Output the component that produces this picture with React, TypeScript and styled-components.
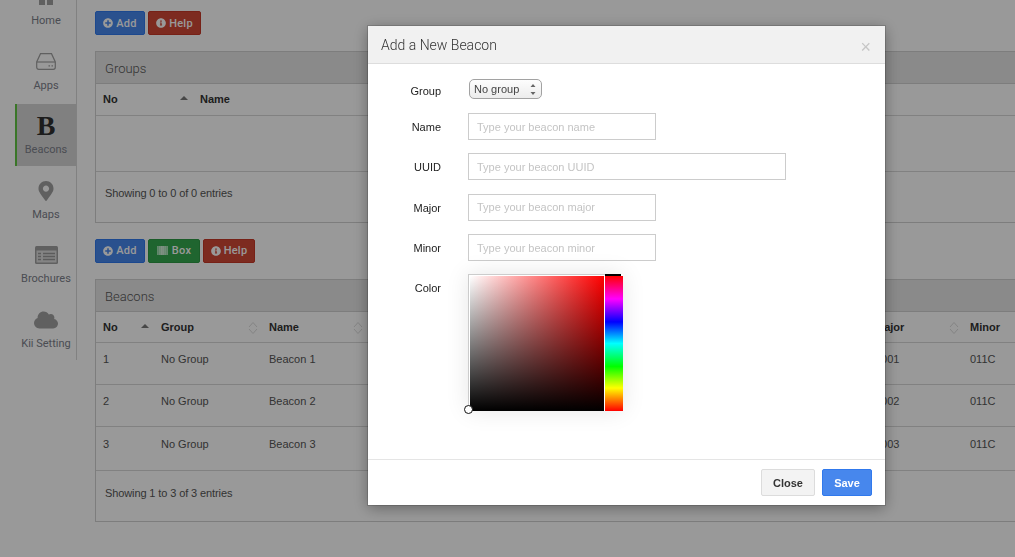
import styled, { createGlobalStyle } from 'styled-components'
import { FaPlusCircle, FaInfoCircle, FaMapMarkerAlt, FaCloud } from 'react-icons/fa'

const GlobalStyle = createGlobalStyle`
  html, body {
    margin: 0;
    height: 100%;
    overflow: hidden;
    background: #fff;
    font-family: "Liberation Sans", Arial, sans-serif;
    font-size: 11px;
    color: #555;
  }
  * { box-sizing: border-box; }
`

const Page = styled.div`
  display: flex;
  align-items: flex-start;
`

const Sidebar = styled.nav`
  width: 62px;
  margin: -25px 0 0 15px;
  height: 385px;
  border-right: 1px solid #d8d8d8;
  flex-shrink: 0;
  display: flex;
  flex-direction: column;
  gap: 2.5px;
  font-family: Roboto, sans-serif;
`

const NavItem = styled.a<{ $active?: boolean }>`
  height: 62px;
  padding: 8px 0 0 1px;
  display: flex;
  flex-direction: column;
  align-items: center;
  font-size: 11px;
  line-height: 14px;
  color: #7c808a;
  background: ${(p) => (p.$active ? '#d6d6d6' : 'transparent')};
  box-shadow: ${(p) => (p.$active ? 'inset 2px 0 0 #62c544' : 'none')};
  white-space: nowrap;
`

const IconSlot = styled.div`
  height: 28px;
  margin-bottom: 3px;
  display: flex;
  align-items: center;
  justify-content: center;
  color: #a0a0a0;
`

const BeaconGlyph = styled.span`
  font-family: "Liberation Serif", serif;
  font-weight: bold;
  font-size: 28px;
  line-height: 28px;
  color: #303030;
`

const Main = styled.main`
  flex: 1;
  min-width: 0;
  padding: 11px 0 0 18px;
  margin-right: -10px;
`

const Toolbar = styled.div`
  display: flex;
  gap: 3px;
  margin-bottom: 16px;
`

const ToolButton = styled.button<{ $bg: string; $edge: string; $w: number }>`
  width: ${(p) => p.$w}px;
  height: 24px;
  padding: 0;
  border: 1px solid ${(p) => p.$edge};
  border-radius: 2px;
  background: ${(p) => p.$bg};
  color: #fff;
  font-family: Roboto, sans-serif;
  font-size: 11px;
  font-weight: 500;
  letter-spacing: 0.25px;
  display: flex;
  align-items: center;
  justify-content: center;
  gap: 3px;
`

const Swatch = styled.span`
  width: 11px;
  height: 9px;
  margin-right: 1px;
  background: repeating-linear-gradient(90deg, rgba(255, 255, 255, 0.25) 0 1px, transparent 1px 2px),
    linear-gradient(90deg, #7fd294, #cfeed6 45%, #8ad89e);
`

const Panel = styled.section`
  border: 1px solid #d0d0d0;
  margin-bottom: 16px;
`

const PanelHeading = styled.h3`
  margin: 0;
  height: 32px;
  padding: 0 9px;
  background: #e6e6e6;
  border-bottom: 1px solid #d0d0d0;
  font-family: Roboto, sans-serif;
  font-weight: 300;
  font-size: 13px;
  line-height: 34px;
  color: #555;
`

const Table = styled.table`
  width: 100%;
  border-collapse: collapse;
  table-layout: fixed;
`

const HeadCell = styled.th`
  position: relative;
  height: 31px;
  padding: 0 7px;
  text-align: left;
  font-size: 11px;
  font-weight: bold;
  color: #333;
  border-bottom: 1px solid #d8d8d8;
`

const SortMark = styled.svg`
  position: absolute;
  right: 4px;
  top: 9px;
`

const Cell = styled.td<{ $h: number; $pad?: number }>`
  height: ${(p) => p.$h}px;
  padding: ${(p) => p.$pad ?? 10}px 7px 0;
  vertical-align: top;
  font-size: 11px;
  line-height: 13px;
  color: #555;
  border-bottom: 1px solid #d8d8d8;
`

const TableInfo = styled.div<{ $top: number }>`
  height: 50px;
  padding: ${(p) => p.$top}px 9px 0;
  font-size: 11px;
  letter-spacing: -0.11px;
  line-height: 13px;
  color: #555;
`

const Backdrop = styled.div`
  position: fixed;
  inset: 0;
  background: rgba(0, 0, 0, 0.4);
`

const Modal = styled.div`
  position: fixed;
  left: 368px;
  top: 26px;
  width: 517px;
  height: 479px;
  display: flex;
  flex-direction: column;
  background: #fff;
  box-shadow: 0 0 0 1px rgba(0, 0, 0, 0.15), 0 3px 14px rgba(0, 0, 0, 0.35);
`

const ModalHeader = styled.header`
  height: 38px;
  padding: 0 13px;
  display: flex;
  align-items: center;
  justify-content: space-between;
  background: #f1f1f1;
  border-bottom: 1px solid #ddd;
`

const ModalTitle = styled.h4`
  margin: 0;
  font-family: Roboto, sans-serif;
  font-weight: 300;
  font-size: 14px;
  color: #333;
`

const CloseX = styled.span`
  padding-top: 4px;
  margin-right: 1px;
  font-size: 18px;
  line-height: 18px;
  color: #c6c6c6;
`

const ModalBody = styled.div`
  flex: 1;
  padding-top: 15px;
  display: flex;
  flex-direction: column;
  gap: 13.33px;
`

const FormRow = styled.div<{ $h?: number }>`
  height: ${(p) => p.$h ?? 27}px;
  display: grid;
  grid-template-columns: 73px 1fr;
  column-gap: 27px;
  align-items: start;
`

const Label = styled.label<{ $lh?: number }>`
  text-align: right;
  font-size: 11px;
  line-height: ${(p) => p.$lh ?? 28}px;
  color: #222;
`

const FakeSelect = styled.div`
  position: relative;
  width: 73px;
  height: 20px;
  margin-left: 1px;
  padding-left: 4px;
  border: 1px solid #a2a2a2;
  border-radius: 5px;
  background: linear-gradient(#fdfdfd, #ececec);
  font-size: 11px;
  line-height: 18px;
  color: #444;
`

const SelectArrows = styled.svg`
  position: absolute;
  right: 4px;
  top: 3px;
`

const TextInput = styled.input<{ $w: number }>`
  display: block;
  width: ${(p) => p.$w}px;
  height: 27px;
  padding: 0 8px;
  border: 1px solid #ccc;
  border-radius: 0;
  outline: none;
  font-family: "Liberation Sans", Arial, sans-serif;
  font-size: 11px;
  &::placeholder {
    color: #c4c4c4;
    opacity: 1;
  }
`

const Picker = styled.div`
  position: relative;
  display: flex;
  width: 155px;
  height: 137px;
  box-shadow: 0 0 22px rgba(0, 0, 0, 0.1);
`

const SatBox = styled.div`
  width: 137px;
  height: 137px;
  border-top: 1px solid #ccc;
  border-left: 1px solid #ccc;
  padding: 1px 1px 0 1px;
  background: #fff;
`

const SatFill = styled.div`
  width: 100%;
  height: 100%;
  background: linear-gradient(to top, #000, transparent), linear-gradient(to right, #fff, #f00);
`

const HueBar = styled.div`
  width: 18px;
  height: 135px;
  margin-top: 2px;
  background: linear-gradient(#f00, #f0f 17%, #00f 34%, #0ff 50%, #0f0 67%, #ff0 83%, #f00);
`

const HueCursor = styled.span`
  position: absolute;
  left: 137px;
  top: 0;
  width: 16px;
  height: 2px;
  background: #000;
`

const SatCursor = styled.span`
  position: absolute;
  left: -4px;
  top: 131px;
  width: 9px;
  height: 9px;
  border: 1px solid #111;
  border-radius: 50%;
  background: #fff;
`

const ModalFooter = styled.footer`
  height: 46px;
  padding: 9px 13px 0 0;
  display: flex;
  justify-content: flex-end;
  gap: 7px;
  border-top: 1px solid #e5e5e5;
`

const FooterButton = styled.button<{ $primary?: boolean }>`
  width: ${(p) => (p.$primary ? 50 : 54)}px;
  height: 27px;
  padding: 0;
  border-radius: 2px;
  border: 1px solid ${(p) => (p.$primary ? '#3079ed' : '#dcdcdc')};
  background: ${(p) => (p.$primary ? '#4787ed' : '#f3f3f3')};
  color: ${(p) => (p.$primary ? '#fff' : '#333')};
  font-family: "Liberation Sans", Arial, sans-serif;
  font-size: 11px;
  font-weight: bold;
`

const HomeIcon = () => (
  <svg width="20" height="16" viewBox="0 0 20 16" fill="currentColor">
    <path d="M10 0 0 8h3v8h6v-6h2v6h6V8h3z" />
  </svg>
)

const DriveIcon = () => (
  <svg width="20" height="17" viewBox="0 0 20 17" fill="none" stroke="currentColor" strokeWidth="1.2">
    <path d="M4.5.7h11L19.3 9v5.3a2 2 0 0 1-2 2H2.7a2 2 0 0 1-2-2V9z" />
    <path d="M.9 9h18.2" />
    <path d="M12.5 12.8h1.5M15.5 12.8H17" />
  </svg>
)

const ListIcon = () => (
  <svg width="23" height="18" viewBox="0 0 23 18">
    <rect width="23" height="18" rx="1.5" fill="currentColor" />
    <rect x="1.5" y="4.5" width="20" height="12" fill="#ddd" />
    <path d="M3 7.5h3M8 7.5h12M3 10.5h3M8 10.5h12M3 13.5h3M8 13.5h12" stroke="#999" strokeWidth="1.4" />
  </svg>
)

const SortAsc = () => (
  <SortMark width="10" height="12" viewBox="0 0 10 12">
    <path d="M1 7 5 3l4 4z" fill="#777" />
  </SortMark>
)

const SortBoth = () => (
  <SortMark width="10" height="14" viewBox="0 0 10 14" fill="none" stroke="#dcdcdc">
    <path d="M1 6 5 1.5 9 6M1 8l4 4.5L9 8" />
  </SortMark>
)

const navItems = [
  { label: 'Home', icon: <HomeIcon /> },
  { label: 'Apps', icon: <DriveIcon /> },
  { label: 'Beacons', icon: <BeaconGlyph>B</BeaconGlyph>, active: true },
  { label: 'Maps', icon: <FaMapMarkerAlt size={20} /> },
  { label: 'Brochures', icon: <ListIcon /> },
  { label: 'Kii Setting', icon: <FaCloud size={24} /> },
]

const beacons = [
  { no: 1, h: 42, pad: 10, major: '0001' },
  { no: 2, h: 42, pad: 10, major: '0002' },
  { no: 3, h: 44, pad: 11, major: '0003' },
]

const fields = [
  { label: 'Name', placeholder: 'Type your beacon name', w: 188 },
  { label: 'UUID', placeholder: 'Type your beacon UUID', w: 318 },
  { label: 'Major', placeholder: 'Type your beacon major', w: 188 },
  { label: 'Minor', placeholder: 'Type your beacon minor', w: 188 },
]

const App = () => {
  return (
    <>
      <GlobalStyle />
      <Page>
        <Sidebar>
          {navItems.map((v) => (
            <NavItem key={v.label} $active={v.active}>
              <IconSlot>{v.icon}</IconSlot>
              {v.label}
            </NavItem>
          ))}
        </Sidebar>
        <Main>
          <Toolbar>
            <ToolButton $bg="#4787ed" $edge="#3079ed" $w={50}>
              <FaPlusCircle size={10} /> Add
            </ToolButton>
            <ToolButton $bg="#d14836" $edge="#c53727" $w={53}>
              <FaInfoCircle size={10} /> Help
            </ToolButton>
          </Toolbar>
          <Panel>
            <PanelHeading>Groups</PanelHeading>
            <Table>
              <colgroup>
                <col width="97" />
                <col />
              </colgroup>
              <thead>
                <tr>
                  <HeadCell>
                    No
                    <SortAsc />
                  </HeadCell>
                  <HeadCell>Name</HeadCell>
                </tr>
              </thead>
              <tbody>
                <tr>
                  <Cell colSpan={2} $h={56} />
                </tr>
              </tbody>
            </Table>
            <TableInfo $top={15}>Showing 0 to 0 of 0 entries</TableInfo>
          </Panel>
          <Toolbar>
            <ToolButton $bg="#4787ed" $edge="#3079ed" $w={50}>
              <FaPlusCircle size={10} /> Add
            </ToolButton>
            <ToolButton $bg="#35a84f" $edge="#2d9a45" $w={52}>
              <Swatch /> Box
            </ToolButton>
            <ToolButton $bg="#d14836" $edge="#c53727" $w={52}>
              <FaInfoCircle size={10} /> Help
            </ToolButton>
          </Toolbar>
          <Panel>
            <PanelHeading>Beacons</PanelHeading>
            <Table>
              <colgroup>
                <col width="58" />
                <col width="108" />
                <col width="105" />
                <col width="501" />
                <col width="95" />
                <col />
              </colgroup>
              <thead>
                <tr>
                  <HeadCell>
                    No
                    <SortAsc />
                  </HeadCell>
                  <HeadCell>
                    Group
                    <SortBoth />
                  </HeadCell>
                  <HeadCell>
                    Name
                    <SortBoth />
                  </HeadCell>
                  <HeadCell>
                    UUID
                    <SortBoth />
                  </HeadCell>
                  <HeadCell>
                    Major
                    <SortBoth />
                  </HeadCell>
                  <HeadCell>Minor</HeadCell>
                </tr>
              </thead>
              <tbody>
                {beacons.map((b) => (
                  <tr key={b.no}>
                    <Cell $h={b.h} $pad={b.pad}>{b.no}</Cell>
                    <Cell $h={b.h} $pad={b.pad}>No Group</Cell>
                    <Cell $h={b.h} $pad={b.pad}>Beacon {b.no}</Cell>
                    <Cell $h={b.h} $pad={b.pad} />
                    <Cell $h={b.h} $pad={b.pad}>{b.major}</Cell>
                    <Cell $h={b.h} $pad={b.pad}>011C</Cell>
                  </tr>
                ))}
              </tbody>
            </Table>
            <TableInfo $top={16}>Showing 1 to 3 of 3 entries</TableInfo>
          </Panel>
        </Main>
      </Page>
      <Backdrop />
      <Modal>
        <ModalHeader>
          <ModalTitle>Add a New Beacon</ModalTitle>
          <CloseX>×</CloseX>
        </ModalHeader>
        <ModalBody>
          <FormRow $h={20.7}>
            <Label $lh={24}>Group</Label>
            <FakeSelect>
              No group
              <SelectArrows width="8" height="13" viewBox="0 0 8 13" fill="#666">
                <path d="M4 1 6.5 4h-5zM4 12 1.5 9h5z" />
              </SelectArrows>
            </FakeSelect>
          </FormRow>
          {fields.map((v) => (
            <FormRow key={v.label}>
              <Label>{v.label}</Label>
              <TextInput $w={v.w} placeholder={v.placeholder} />
            </FormRow>
          ))}
          <FormRow>
            <Label>Color</Label>
            <Picker>
              <SatBox>
                <SatFill />
              </SatBox>
              <HueBar />
              <HueCursor />
              <SatCursor />
            </Picker>
          </FormRow>
        </ModalBody>
        <ModalFooter>
          <FooterButton>Close</FooterButton>
          <FooterButton $primary>Save</FooterButton>
        </ModalFooter>
      </Modal>
    </>
  )
}

export default App
